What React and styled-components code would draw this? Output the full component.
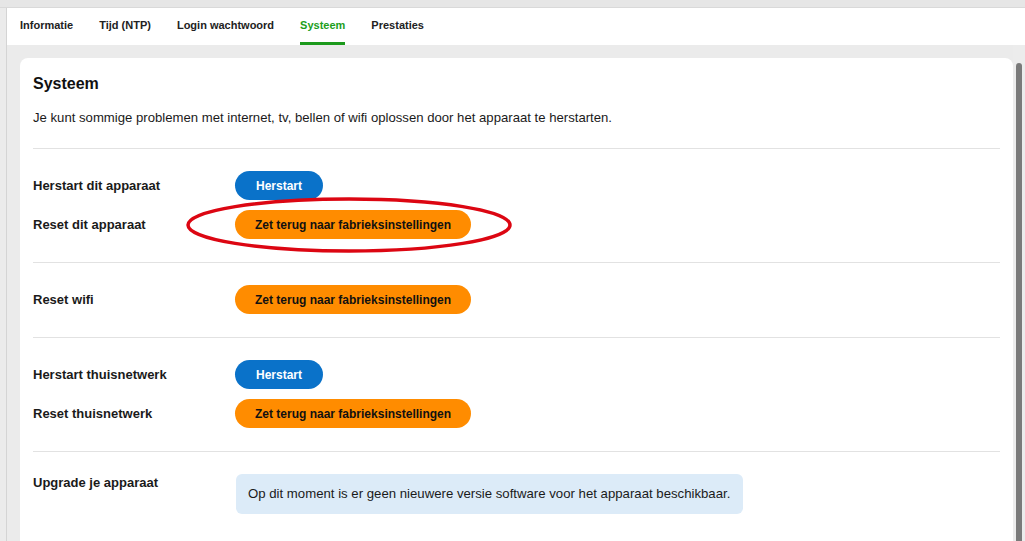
import React from "react";
import styled, { createGlobalStyle } from "styled-components";

const GlobalStyle = createGlobalStyle`
  html, body {
    margin: 0;
    padding: 0;
    background: #ebebeb;
    font-family: "Liberation Sans", Arial, sans-serif;
    color: #1a1a1a;
  }
`;

const tabs = ["Informatie", "Tijd (NTP)", "Login wachtwoord", "Systeem", "Prestaties"];

const App = () => {
  return (
    <Page>
      <GlobalStyle />
      <TopStrip />
      <Frame>
        <TabBar>
          {tabs.map((t) => (
            <Tab key={t} active={t === "Systeem"}>
              {t}
            </Tab>
          ))}
        </TabBar>
        <Body>
          <CardArea>
            <Card>
              <Title>Systeem</Title>
              <Intro>
                Je kunt sommige problemen met internet, tv, bellen of wifi oplossen door het apparaat te herstarten.
              </Intro>

              <Section>
                <Row>
                  <Label>Herstart dit apparaat</Label>
                  <Button>Herstart</Button>
                </Row>
                <Row>
                  <Label>Reset dit apparaat</Label>
                  <Marked>
                    <Button variant="orange">Zet terug naar fabrieksinstellingen</Button>
                    <Ring viewBox="0 0 326 56" width="326" height="56">
                      <ellipse cx="163" cy="28" rx="161" ry="26" fill="none" stroke="#dc0612" strokeWidth="3.5" />
                    </Ring>
                  </Marked>
                </Row>
              </Section>

              <Section>
                <Row>
                  <Label>Reset wifi</Label>
                  <Button variant="orange">Zet terug naar fabrieksinstellingen</Button>
                </Row>
              </Section>

              <Section>
                <Row>
                  <Label>Herstart thuisnetwerk</Label>
                  <Button>Herstart</Button>
                </Row>
                <Row>
                  <Label>Reset thuisnetwerk</Label>
                  <Button variant="orange">Zet terug naar fabrieksinstellingen</Button>
                </Row>
              </Section>

              <Section>
                <Row top>
                  <Label top>Upgrade je apparaat</Label>
                  <InfoBox>
                    Op dit moment is er geen nieuwere versie software voor het apparaat beschikbaar.
                  </InfoBox>
                </Row>
              </Section>
            </Card>
          </CardArea>
          <ScrollTrack>
            <ScrollThumb />
          </ScrollTrack>
        </Body>
      </Frame>
    </Page>
  );
};

export default App;

const Page = styled.div`
  width: 1025px;
  height: 541px;
  overflow: hidden;
  background: #ebebeb;
  display: flex;
  flex-direction: column;
`;

const TopStrip = styled.div`
  height: 7px;
  background: #e6e6e6;
  border-bottom: 1px solid #d9d9d9;
  flex-shrink: 0;
`;

const Frame = styled.div`
  flex: 1;
  margin-left: 6px;
  border-left: 1px solid #d4d4d4;
  display: flex;
  flex-direction: column;
  min-height: 0;
`;

const TabBar = styled.div`
  height: 37px;
  background: #fff;
  display: flex;
  align-items: flex-start;
  padding-left: 13px;
  gap: 26px;
  flex-shrink: 0;
`;

const Tab = styled.div`
  display: flex;
  align-items: center;
  height: 33px;
  padding-top: 1px;
  font-size: 11px;
  font-weight: bold;
  line-height: 1;
  color: ${(p) => (p.active ? "#1c9e1c" : "#222")};
  border-bottom: 3px solid ${(p) => (p.active ? "#1c9a1c" : "transparent")};
`;

const Body = styled.div`
  flex: 1;
  display: flex;
  min-height: 0;
  background: #ebebeb;
`;

const CardArea = styled.div`
  flex: 1;
  padding: 13px 0 0 13px;
  min-width: 0;
`;

const Card = styled.div`
  background: #fff;
  border-radius: 8px 8px 0 0;
  padding: 15px 13px 30px 13px;
  height: 100%;
  box-sizing: border-box;
`;

const Title = styled.h2`
  margin: 0;
  font-size: 16px;
  font-weight: bold;
  color: #111;
  line-height: 22px;
`;

const Intro = styled.p`
  margin: 14px 0 0;
  font-size: 13.15px;
  line-height: 18px;
  color: #1a1a1a;
  padding-bottom: 21px;
`;

const Section = styled.div`
  border-top: 1px solid #e2e2e2;
  padding: 22px 0 23px;
  display: flex;
  flex-direction: column;
  gap: 10px;
`;

const Row = styled.div`
  display: flex;
  align-items: ${(p) => (p.top ? "flex-start" : "center")};
`;

const Label = styled.div`
  width: 202px;
  flex-shrink: 0;
  font-size: 13px;
  font-weight: bold;
  color: #1a1a1a;
  padding-top: ${(p) => (p.top ? "1px" : "0")};
`;

const Button = styled.button`
  height: 29px;
  border: none;
  border-radius: 15px;
  padding: 0 ${(p) => (p.variant === "orange" ? "20px" : "21px")};
  font-family: "Liberation Sans", Arial, sans-serif;
  font-size: 12px;
  font-weight: bold;
  cursor: pointer;
  background: ${(p) => (p.variant === "orange" ? "#ff8c00" : "#0a72c9")};
  color: ${(p) => (p.variant === "orange" ? "#111" : "#fff")};
`;

const Marked = styled.div`
  position: relative;
  display: inline-flex;
`;

const Ring = styled.svg`
  position: absolute;
  left: -49px;
  top: -13px;
  pointer-events: none;
  overflow: visible;
`;

const InfoBox = styled.div`
  background: #dcebf8;
  border-radius: 6px;
  padding: 11px 13px 11px 12px;
  font-size: 13.2px;
  line-height: 18px;
  color: #1a1a1a;
  margin-left: 1px;
`;

const ScrollTrack = styled.div`
  width: 12px;
  flex-shrink: 0;
  display: flex;
  justify-content: center;
  padding-top: 18px;
  background: #ececec;
`;

const ScrollThumb = styled.div`
  width: 6px;
  height: 100%;
  background: #7a7a7a;
  border-radius: 3px 3px 0 0;
`;
